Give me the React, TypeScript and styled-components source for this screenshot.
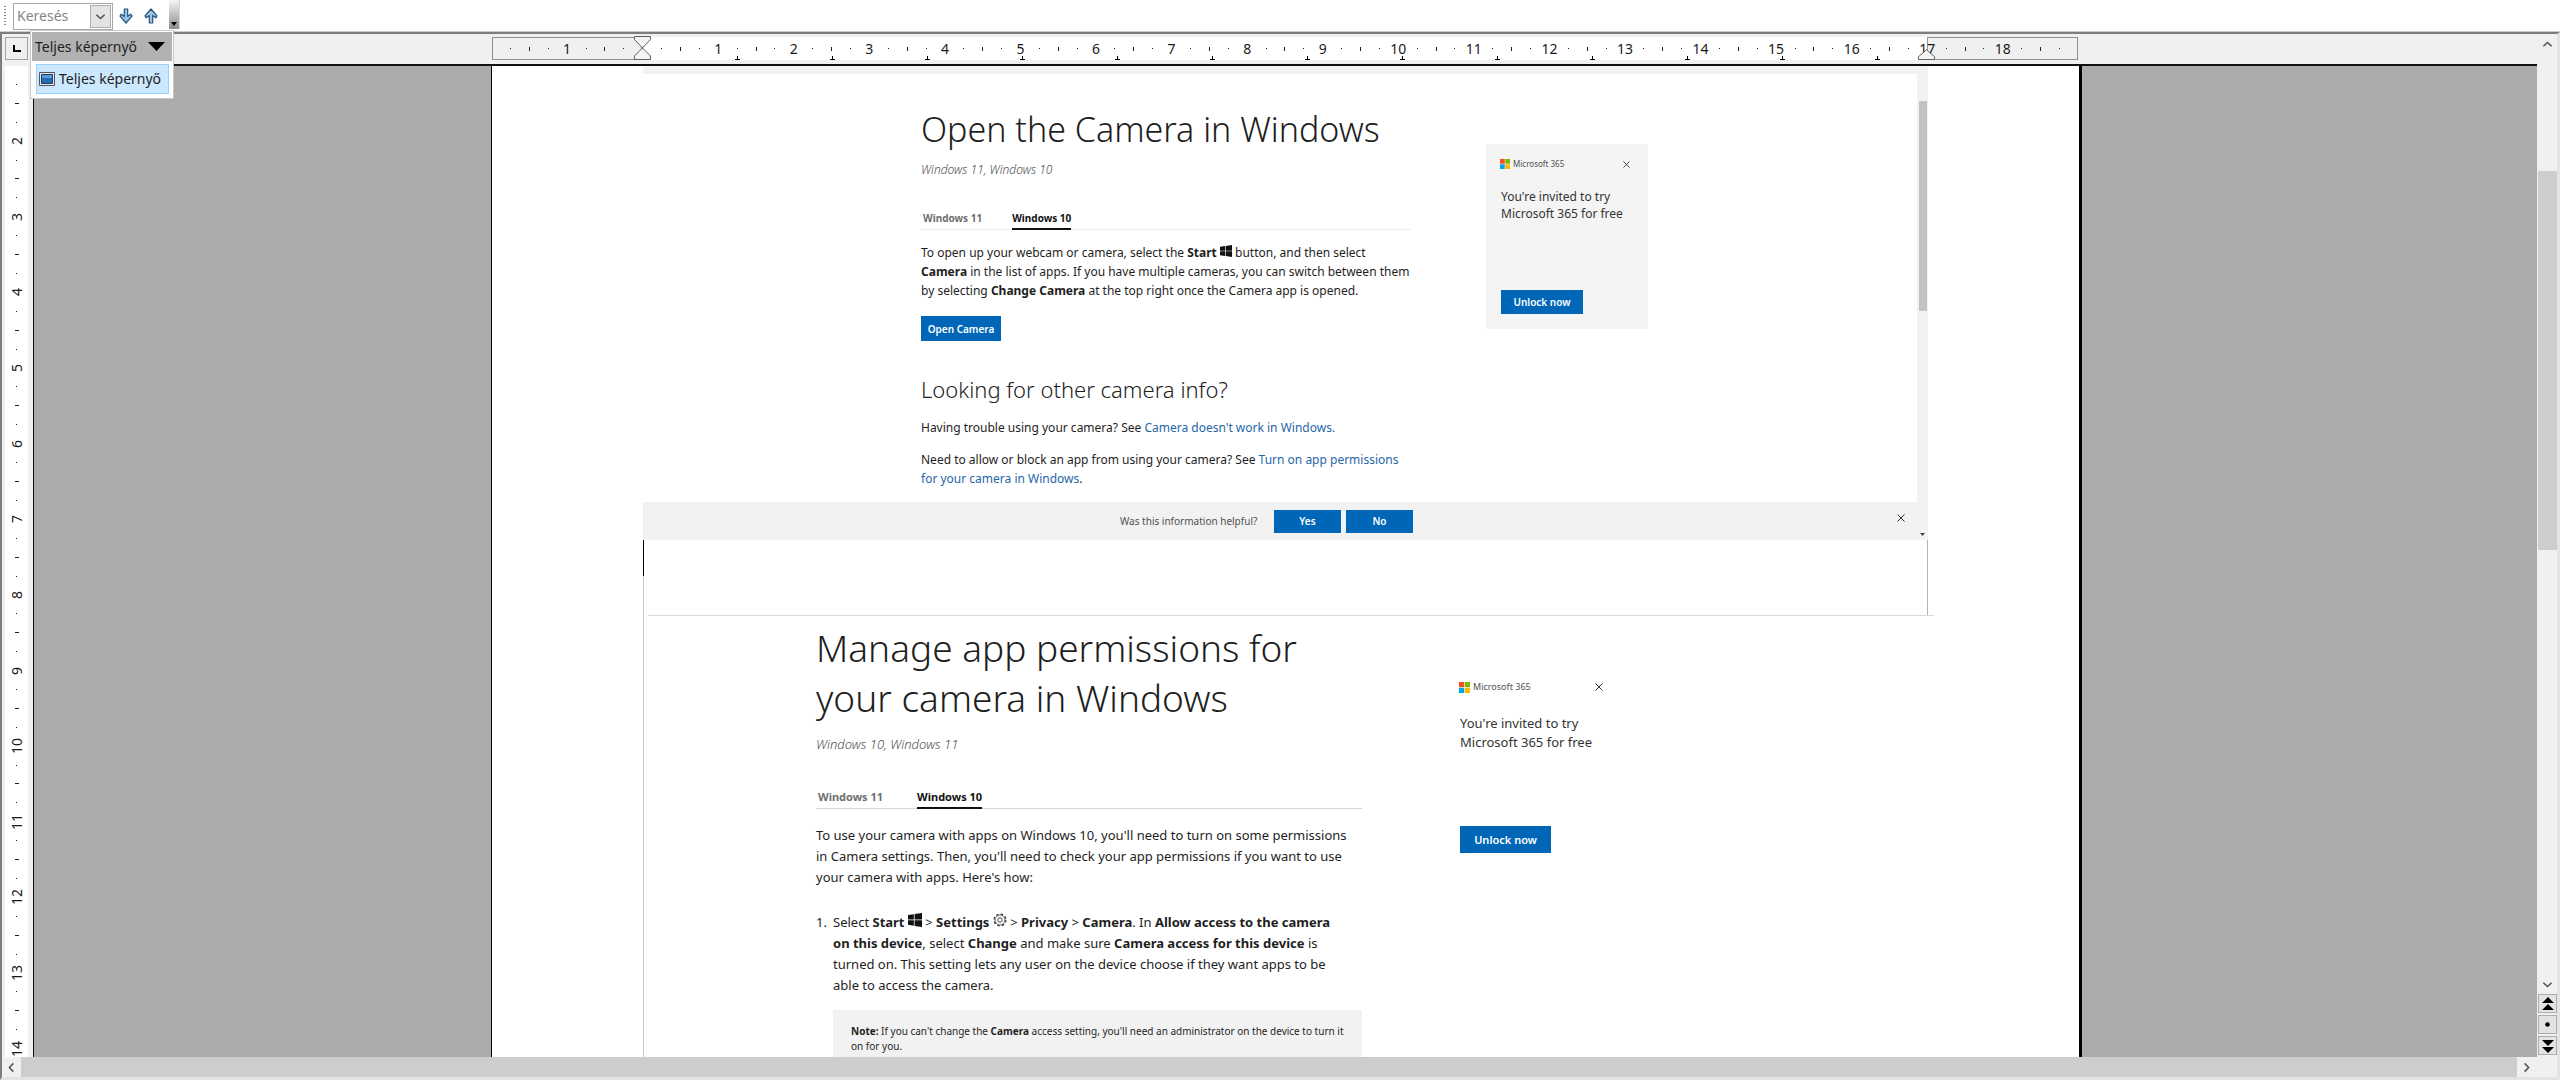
import React from "react";
import styled, { createGlobalStyle, css } from "styled-components";

const UI_FONT = '"Noto Sans", "Open Sans", sans-serif';

const GlobalStyle = createGlobalStyle`
  * { box-sizing: border-box; }
  html, body { margin: 0; background: #fff; overflow: hidden; }
  body { font-family: ${UI_FONT}; color: #1e1e1e; }
  button, input { font-family: inherit; margin: 0; padding: 0; border: 0; border-radius: 0; background: none; color: inherit; }
  h1, h2, p, ol { margin: 0; padding: 0; font-weight: 400; }
  b { font-weight: 700; }
  svg { display: block; flex: none; }
`;

/* ---------- window frame ---------- */

const Window = styled.div`
  display: flex;
  flex-direction: column;
  height: 100vh;
  min-height: 480px;
  position: relative;
`;

const Toolbar = styled.header`
  display: flex;
  align-items: center;
  height: 32px;
  flex: none;
  padding-left: 4px;
`;

const Grip = styled.div`
  width: 2px;
  height: 20px;
  margin-right: 7px;
  background: repeating-linear-gradient(#8c8c8c 0 1px, #fff 1px 3px);
`;

const SearchBox = styled.div`
  display: flex;
  align-items: center;
  width: 100px;
  height: 27px;
  padding-right: 1px;
  border: 1px solid #a8a8a8;
`;

const SearchInput = styled.input`
  flex: 1;
  min-width: 0;
  padding-left: 3px;
  font-size: 14px;
  line-height: 20px;
  outline: 0;
  &::placeholder { color: #868686; opacity: 1; }
`;

const DropButton = styled.button`
  display: grid;
  place-items: center;
  width: 21px;
  height: 23px;
  border: 1px solid #adadad;
  background: #e3e3e3;
`;

const ToolButton = styled.button`
  display: grid;
  place-items: center;
  width: 25px;
  height: 27px;
`;

const OverflowButton = styled.button`
  display: flex;
  align-items: flex-end;
  justify-content: center;
  align-self: flex-start;
  width: 11px;
  height: 29px;
  margin-left: 6px;
  padding-bottom: 3px;
  background: linear-gradient(#f4f4f4, #8e8e8e);
  border-right: 1px solid #d6d6d6;
`;

const Frame = styled.main`
  flex: 1;
  min-height: 0;
  display: grid;
  grid-template-columns: 32px minmax(0, 1fr) 20px;
  grid-template-rows: 32px minmax(0, 1fr) 20px;
  border-top: 2px solid #7d7d7d;
  border-left: 2px solid #7d7d7d;
  border-right: 3px solid #e3e3e3;
  border-bottom: 3px solid #e3e3e3;
  box-shadow: 0 -1px 0 #cdcdcd;
  background: #f0f0f0;
`;

/* ---------- rulers ---------- */

const Corner = styled.div`
  padding: 3px 0 0 3px;
  background: #f0f0f0;
`;

const TabTypeButton = styled.button`
  display: grid;
  place-items: center;
  width: 23px;
  height: 23px;
  border: 1px solid #a0a0a0;
`;

const RulerBand = styled.div`
  display: flex;
  justify-content: center;
  padding: 3px 1px 0 0;
  background: #f0f0f0;
  border-bottom: 2px solid #101010;
  overflow: hidden;
`;

const Ruler = styled.div`
  display: grid;
  grid-template-columns: 150px minmax(0, 1fr) 151px;
  grid-template-rows: 23px;
  width: 1586px;
  height: 23px;
  flex: none;
`;

const RulerZone = styled.div<{ $column: number; $text?: boolean }>`
  grid-row: 1;
  grid-column: ${(p) => p.$column};
  ${(p) =>
    p.$text
      ? css`background: #fff;`
      : css`border: 1px solid #8f8f8f;`}
`;

const Scale = styled.div`
  grid-row: 1;
  grid-column: 1 / -1;
  display: flex;
  align-items: center;
  padding: 0 9px;
`;

const Slot = styled.div`
  flex: 1 1 0;
  min-width: 0;
  min-height: 0;
  display: flex;
  align-items: center;
  justify-content: center;
  font-size: 14px;
  line-height: 20px;
  color: #1a1a1a;
`;

const Tick = styled.i<{ $w: number; $h: number }>`
  width: ${(p) => p.$w}px;
  height: ${(p) => p.$h}px;
  background: #222;
`;

const TabStops = styled.div`
  grid-row: 1;
  grid-column: 2;
  display: flex;
  align-items: flex-end;
  padding-left: 48px;
`;

const TabStop = styled.div`
  display: flex;
  justify-content: center;
  width: 95px;
  flex: none;
`;

const Marker = styled.div<{ $side: "left" | "right" }>`
  grid-row: 1;
  grid-column: 2;
  display: flex;
  align-items: flex-end;
  justify-self: ${(p) => (p.$side === "left" ? "start" : "end")};
  ${(p) => (p.$side === "left" ? "margin-left: -8px;" : "margin-right: -8px;")}
`;

const SideRuler = styled.div`
  padding: 0 4px 0 3px;
  border-right: 1px solid #101010;
  overflow: hidden;
`;

const SideScale = styled.div`
  display: flex;
  flex-direction: column;
  width: 23px;
  height: 1011px;
  padding-top: 9px;
  background: #fff;
`;

const SideNumber = styled.span`
  writing-mode: vertical-rl;
  transform: rotate(180deg);
`;

/* ---------- scroll bars ---------- */

const VScroll = styled.div`
  grid-column: 3;
  grid-row: 1 / 3;
  display: flex;
  flex-direction: column;
  align-items: stretch;
  padding-left: 1px;
  background: #f0f0f0;
`;

const ScrollButton = styled.button`
  display: grid;
  place-items: center;
  flex: none;
  height: 20px;
  min-width: 19px;
`;

const VTrack = styled.div`
  flex: 1;
  display: grid;
  grid-template-rows: 127fr 412fr 461fr;
`;

const Thumb = styled.div`
  grid-row: 2;
  background: #cdcdcd;
`;

const NavButton = styled.button`
  display: grid;
  place-items: center;
  flex: none;
  height: 19px;
  margin-bottom: 2px;
  border: 1px solid #adadad;
  background: #e3e3e3;
`;

const HScroll = styled.div`
  grid-column: 1 / -1;
  display: flex;
  padding-right: 21px;
`;

const HThumb = styled.div`
  flex: 1;
  background: #cdcdcd;
`;

/* ---------- document ---------- */

const Workspace = styled.div`
  display: flex;
  justify-content: center;
  padding-left: 2px;
  background: #ababab;
  overflow: hidden;
`;

const Sheet = styled.div`
  width: 1591px;
  flex: none;
  padding: 0 151px;
  background: #fff;
  border-left: 1px solid #000;
  border-right: 3px solid #000;
`;

const BrowserShot = styled.section`
  display: grid;
  grid-template-columns: minmax(0, 1fr) 11px;
  grid-template-rows: 8px 428px 38px;
`;

const ShotTop = styled.div`
  grid-column: 1 / -1;
  background: #f2f2f2;
`;

const ShotBody = styled.div`
  display: flex;
  align-items: flex-start;
  padding-left: 278px;
`;

const ShotTrack = styled.div`
  padding: 27px 1px 0 2px;
  background: #f2f2f2;
`;

const ShotThumb = styled.div`
  height: 210px;
  background: #c2c2c2;
`;

const Feedback = styled.footer`
  grid-column: 1 / -1;
  display: grid;
  grid-template-columns: minmax(0, 1fr) auto 11px;
  align-items: center;
  background: #f2f2f2;
`;

const FeedbackAsk = styled.div`
  display: flex;
  align-items: center;
  padding-left: 477px;
  font-size: 10px;
  line-height: 16px;
  color: #505050;
  white-space: nowrap;
`;

const FeedbackText = styled.span`
  width: 154px;
`;

const EmptyLine = styled.div`
  display: flex;
  justify-content: space-between;
  height: 75px;
  border-right: 1px solid #b4b4b4;
  border-left: 1px solid #c8c8c8;
`;

const Caret = styled.i`
  width: 1px;
  height: 36px;
  margin-left: -1px;
  background: #000;
`;

const SecondShot = styled.section`
  border-left: 1px solid #c8c8c8;
`;

const SecondRule = styled.div`
  height: 1px;
  margin: 0 -6px 0 4px;
  background: #d9d9d9;
`;

const SecondBody = styled.div`
  display: flex;
  align-items: flex-start;
  padding-left: 172px;
`;

const Article = styled.article<{ $w: number; $top: number }>`
  width: ${(p) => p.$w}px;
  flex: none;
  padding-top: ${(p) => p.$top}px;
  white-space: nowrap;
`;

const Title = styled.h1<{ $big?: boolean }>`
  font-weight: 300;
  font-size: ${(p) => (p.$big ? 37 : 34)}px;
  line-height: 50px;
`;

const Applies = styled.p<{ $big?: boolean }>`
  font-style: italic;
  font-weight: 300;
  color: #505050;
  font-size: ${(p) => (p.$big ? 13 : 12)}px;
  line-height: ${(p) => (p.$big ? 18 : 16)}px;
  margin-top: ${(p) => (p.$big ? 12 : 8)}px;
`;

const Tabs = styled.div<{ $big?: boolean }>`
  display: flex;
  gap: ${(p) => (p.$big ? 34 : 30)}px;
  padding-left: 2px;
  margin-top: ${(p) => (p.$big ? 36 : 32)}px;
  font-size: ${(p) => (p.$big ? 11 : 10)}px;
  box-shadow: inset 0 -1px 0 ${(p) => (p.$big ? "#d6d6d6" : "#ececec")};
`;

const Tab = styled.button<{ $active?: boolean }>`
  font-size: inherit;
  line-height: 16px;
  font-weight: 700;
  padding-bottom: 2px;
  color: ${(p) => (p.$active ? "#111" : "#6e6e6e")};
  border-bottom: 2px solid ${(p) => (p.$active ? "#111" : "transparent")};
`;

const Text = styled.p<{ $big?: boolean; $gap: number }>`
  font-size: ${(p) => (p.$big ? 13 : 12)}px;
  line-height: ${(p) => (p.$big ? 21 : 19)}px;
  margin-top: ${(p) => p.$gap}px;
`;

const Subtitle = styled.h2`
  font-weight: 300;
  font-size: 22px;
  line-height: 32px;
  margin-top: 32px;
`;

const Link = styled.a`
  color: #1f66a8;
  text-decoration: none;
`;

const BlueButton = styled.button<{ $w: number; $h: number; $size: number; $gap?: number }>`
  display: block;
  width: ${(p) => p.$w}px;
  height: ${(p) => p.$h}px;
  font-size: ${(p) => p.$size}px;
  line-height: 16px;
  margin-top: ${(p) => p.$gap || 0}px;
  background: #0067b8;
  color: #fff;
  font-weight: 600;
  white-space: nowrap;
`;

const AnswerButton = styled(BlueButton)`
  margin-right: 5px;
`;

const Steps = styled.ol`
  display: block;
  margin-top: 24px;
  list-style: none;
`;

const Step = styled.li`
  display: grid;
  grid-template-columns: 17px minmax(0, 1fr);
  font-size: 13px;
  line-height: 21px;
`;

const Note = styled.div`
  grid-column: 2;
  margin-top: 14px;
  padding: 14px 18px;
  height: 70px;
  background: #f2f2f2;
  font-size: 10px;
  line-height: 15px;
`;

const InlineIcon = styled.span`
  display: inline-block;
  vertical-align: 0;
  line-height: 0;
`;

const Promo = styled.aside<{ $big?: boolean }>`
  display: flex;
  flex-direction: column;
  align-items: flex-start;
  white-space: nowrap;
  color: #333;
  ${(p) =>
    p.$big
      ? css`
          width: 170px;
          margin: 63px 0 0 97px;
          padding-left: 1px;
        `
      : css`
          width: 162px;
          height: 185px;
          margin: 70px 0 0 75px;
          padding: 12px 15px 15px;
          background: #f4f4f4;
        `}
`;

const PromoHead = styled.div<{ $big?: boolean }>`
  display: flex;
  align-items: center;
  align-self: stretch;
  gap: 3px;
  margin-left: -1px;
  font-size: ${(p) => (p.$big ? 9 : 8)}px;
  line-height: 16px;
  color: #505050;
  margin-right: ${(p) => (p.$big ? 22 : -1)}px;
`;

const CloseButton = styled.button`
  display: grid;
  place-items: center;
  width: 16px;
  height: 16px;
  margin-left: auto;
`;

const PromoText = styled.p<{ $big?: boolean }>`
  font-size: ${(p) => (p.$big ? 13 : 12)}px;
  line-height: ${(p) => (p.$big ? 19 : 17)}px;
  margin-top: ${(p) => (p.$big ? 19 : 16)}px;
`;

const FeedbackClose = styled(CloseButton)`
  margin: 0 8px 6px 0;
`;

const FeedbackArrow = styled.div`
  align-self: end;
  padding: 0 0 4px 3px;
`;

/* ---------- floating full-screen toolbar ---------- */

const Floating = styled.div`
  position: absolute;
  left: 30px;
  top: 30px;
  width: 144px;
  border: 2px solid #fff;
  background: #fff;
  outline: 1px solid #c8c8c8;
  outline-offset: -1px;
  font-size: 14px;
  line-height: 20px;
  white-space: nowrap;
`;

const FloatingTitle = styled.div`
  display: flex;
  align-items: center;
  justify-content: space-between;
  height: 29px;
  padding: 0 7px 0 3px;
  background: #b2b2b2;
`;

const FloatingItem = styled.button`
  display: flex;
  align-items: center;
  gap: 4px;
  width: 133px;
  height: 30px;
  margin: 3px 4px 3px;
  padding-left: 2px;
  font-size: 14px;
  line-height: 20px;
  background: #cce8ff;
  border: 1px solid #99d1ff;
`;

/* ---------- drawings ---------- */

const Chevron = ({ turn = 0, w = 11 }: { turn?: number; w?: number }) => (
  <svg width={w} height={w} viewBox="0 0 12 12" fill="none" stroke="#505050" strokeWidth="1.6">
    <path d="M1.5 4 6 8.3 10.500 4" transform={`rotate(${turn} 6 6)`} />
  </svg>
);

const Arrow = ({ up }: { up?: boolean }) => (
  <svg width="14" height="16" viewBox="0 0 14 16">
    <path
      d="M5.300 1h3.400v7.500l3-2.300 1.300 2L7 15 1 8.200l1.300-2 3 2.300z"
      transform={up ? "rotate(180 7 8)" : undefined}
      fill="#9cc3e6"
      stroke="#24527f"
      strokeWidth="1.200"
      strokeLinejoin="round"
    />
  </svg>
);

const Cross = ({ size = 7 }: { size?: number }) => (
  <svg width={size} height={size} viewBox="0 0 8 8" stroke="#333" strokeWidth="1">
    <path d="M.5.5l7 7M7.500.5l-7 7" />
  </svg>
);

const WindowsFlag = ({ size = 13 }: { size?: number }) => (
  <svg width={size} height={size} viewBox="0 0 13 13" fill="#111">
    <path d="M0 1.900 5.400 1.100v5H0zM6.100 1 13 0v6.100H6.100zM0 6.800h5.400v5L0 11zM6.100 6.800H13V13l-6.900-1z" />
  </svg>
);

const Gear = () => (
  <svg width="14" height="14" viewBox="0 0 14 14" fill="none" stroke="#333">
    <circle cx="7" cy="7" r="5.900" strokeWidth="1.200" strokeDasharray="2.600 2.030" />
    <circle cx="7" cy="7" r="4.900" strokeWidth=".7" />
    <circle cx="7" cy="7" r="2.200" strokeWidth=".9" />
  </svg>
);

const MicrosoftLogo = ({ size }: { size: number }) => (
  <svg width={size} height={size} viewBox="0 0 11 11">
    <path fill="#f25022" d="M0 0h5.200v5.200H0z" />
    <path fill="#7fba00" d="M5.800 0H11v5.200H5.800z" />
    <path fill="#00a4ef" d="M0 5.800h5.200V11H0z" />
    <path fill="#ffb900" d="M5.800 5.800H11V11H5.800z" />
  </svg>
);

const DoubleTriangle = ({ down }: { down?: boolean }) => (
  <svg width="12" height="14" viewBox="0 0 12 14">
    <path d="M6 0l6 6H0zM6 7l6 6H0z" transform={down ? "rotate(180 6 7)" : undefined} />
  </svg>
);

/* ---------- parts ---------- */

const mark = (quarter: number) => Math.abs(quarter) % 4;

function HorizontalRuler() {
  const quarters = Array.from({ length: 83 }, (_, i) => i - 7);
  return (
    <RulerBand>
      <Ruler>
        <RulerZone $column={1} />
        <RulerZone $column={2} $text />
        <RulerZone $column={3} />
        <Scale>
          {quarters.map((q) => (
            <Slot key={q}>
              {mark(q) === 0 ? (q === 0 ? null : Math.abs(q / 4)) : <Tick $w={1} $h={mark(q) === 2 ? 4 : 1} />}
            </Slot>
          ))}
        </Scale>
        <TabStops>
          {Array.from({ length: 13 }, (_, i) => (
            <TabStop key={i}>
              <svg width="5" height="4" viewBox="0 0 5 4">
                <path d="M2 0h1v3h2v1H0V3h2z" />
              </svg>
            </TabStop>
          ))}
        </TabStops>
        <Marker $side="left">
          <svg width="17" height="24" viewBox="0 0 17 24" fill="#f4f4f4" stroke="#606060">
            <path d="M.5.5h16v3L8.500 12 .5 3.500zM8.500 12l8 8v3.500H.5V20z" />
          </svg>
        </Marker>
        <Marker $side="right">
          <svg width="17" height="11" viewBox="0 0 17 11" fill="#f4f4f4" stroke="#606060">
            <path d="M8.500.7l8 7v2.800H.5V7.700z" />
          </svg>
        </Marker>
      </Ruler>
    </RulerBand>
  );
}

function VerticalRuler() {
  const quarters = Array.from({ length: 53 }, (_, i) => i + 5);
  return (
    <SideRuler>
      <SideScale>
        {quarters.map((q) => (
          <Slot key={q}>
            {mark(q) === 0 ? <SideNumber>{q / 4}</SideNumber> : <Tick $w={mark(q) === 2 ? 4 : 1} $h={1} />}
          </Slot>
        ))}
      </SideScale>
    </SideRuler>
  );
}

function PromoCard({ big }: { big?: boolean }) {
  return (
    <Promo $big={big}>
      <PromoHead $big={big}>
        <MicrosoftLogo size={big ? 11 : 10} />
        <span>Microsoft 365</span>
        <CloseButton aria-label="Close">
          <Cross size={big ? 8 : 7} />
        </CloseButton>
      </PromoHead>
      <PromoText $big={big}>
        You're invited to try
        <br />
        Microsoft 365 for free
      </PromoText>
      {big ? (
        <BlueButton $w={91} $h={27} $size={11} $gap={74}>Unlock now</BlueButton>
      ) : (
        <BlueButton $w={82} $h={24} $size={10} $gap={68}>Unlock now</BlueButton>
      )}
    </Promo>
  );
}

function CameraPage() {
  return (
    <BrowserShot>
      <ShotTop />
      <ShotBody>
        <Article $w={490} $top={30}>
          <Title>Open the Camera in Windows</Title>
          <Applies>Windows 11, Windows 10</Applies>
          <Tabs>
            <Tab>Windows 11</Tab>
            <Tab $active>Windows 10</Tab>
          </Tabs>
          <Text $gap={13}>
            To open up your webcam or camera, select the <b>Start</b>{" "}
            <InlineIcon><WindowsFlag size={12} /></InlineIcon> button, and then select
            <br />
            <b>Camera</b> in the list of apps. If you have multiple cameras, you can switch between them
            <br />
            by selecting <b>Change Camera</b> at the top right once the Camera app is opened.
          </Text>
          <BlueButton $w={80} $h={25} $size={10} $gap={16}>Open Camera</BlueButton>
          <Subtitle>Looking for other camera info?</Subtitle>
          <Text $gap={13}>
            Having trouble using your camera? See <Link href="#doesnt-work">Camera doesn't work in Windows.</Link>
          </Text>
          <Text $gap={13}>
            Need to allow or block an app from using your camera? See{" "}
            <Link href="#permissions">
              Turn on app permissions
              <br />
              for your camera in Windows
            </Link>
            .
          </Text>
        </Article>
        <PromoCard />
      </ShotBody>
      <ShotTrack>
        <ShotThumb />
      </ShotTrack>
      <Feedback>
        <FeedbackAsk>
          <FeedbackText>Was this information helpful?</FeedbackText>
          <AnswerButton $w={67} $h={23} $size={10}>Yes</AnswerButton>
          <AnswerButton $w={67} $h={23} $size={10}>No</AnswerButton>
        </FeedbackAsk>
        <FeedbackClose aria-label="Close">
          <Cross size={8} />
        </FeedbackClose>
        <FeedbackArrow>
          <svg width="5" height="3" viewBox="0 0 5 3" fill="#444">
            <path d="M0 0h5L2.500 3z" />
          </svg>
        </FeedbackArrow>
      </Feedback>
    </BrowserShot>
  );
}

function PermissionsPage() {
  return (
    <SecondShot>
      <SecondRule />
      <SecondBody>
        <Article $w={546} $top={7}>
          <Title $big>
            Manage app permissions for
            <br />
            your camera in Windows
          </Title>
          <Applies $big>Windows 10, Windows 11</Applies>
          <Tabs $big>
            <Tab>Windows 11</Tab>
            <Tab $active>Windows 10</Tab>
          </Tabs>
          <Text $big $gap={16}>
            To use your camera with apps on Windows 10, you'll need to turn on some permissions
            <br />
            in Camera settings. Then, you'll need to check your app permissions if you want to use
            <br />
            your camera with apps. Here's how:
          </Text>
          <Steps>
            <Step>
              <span>1.</span>
              <div>
                Select <b>Start</b> <InlineIcon><WindowsFlag size={14} /></InlineIcon> &gt; <b>Settings</b>{" "}
                <InlineIcon><Gear /></InlineIcon> &gt; <b>Privacy</b> &gt; <b>Camera</b>. In{" "}
                <b>Allow access to the camera</b>
                <br />
                <b>on this device</b>, select <b>Change</b> and make sure <b>Camera access for this device</b> is
                <br />
                turned on. This setting lets any user on the device choose if they want apps to be
                <br />
                able to access the camera.
              </div>
              <Note>
                <b>Note:</b> If you can't change the <b>Camera</b> access setting, you'll need an administrator on the
                device to turn it
                <br />
                on for you.
              </Note>
            </Step>
          </Steps>
        </Article>
        <PromoCard big />
      </SecondBody>
    </SecondShot>
  );
}

export default function App() {
  return (
    <>
      <GlobalStyle />
      <Window>
        <Toolbar>
          <Grip />
          <SearchBox>
            <SearchInput type="text" placeholder="Keresés" aria-label="Keresés" />
            <DropButton aria-label="Keresési előzmények">
              <Chevron />
            </DropButton>
          </SearchBox>
          <ToolButton aria-label="Következő">
            <Arrow />
          </ToolButton>
          <ToolButton aria-label="Előző">
            <Arrow up />
          </ToolButton>
          <OverflowButton aria-label="További eszközök">
            <svg width="6" height="4" viewBox="0 0 6 4">
              <path d="M0 0h6L3 4z" />
            </svg>
          </OverflowButton>
        </Toolbar>
        <Frame>
          <Corner>
            <TabTypeButton aria-label="Tabulátor">
              <svg width="8" height="7" viewBox="0 0 8 7">
                <path d="M0 0h2v5h6v2H0z" />
              </svg>
            </TabTypeButton>
          </Corner>
          <HorizontalRuler />
          <VScroll>
            <ScrollButton aria-label="Fel"><Chevron turn={180} /></ScrollButton>
            <VTrack>
              <Thumb />
            </VTrack>
            <ScrollButton aria-label="Le"><Chevron /></ScrollButton>
            <NavButton aria-label="Előző oldal"><DoubleTriangle /></NavButton>
            <NavButton aria-label="Navigáció">
              <svg width="5" height="5" viewBox="0 0 5 5"><circle cx="2.500" cy="2.500" r="2.300" /></svg>
            </NavButton>
            <NavButton aria-label="Következő oldal"><DoubleTriangle down /></NavButton>
          </VScroll>
          <VerticalRuler />
          <Workspace>
            <Sheet>
              <CameraPage />
              <EmptyLine>
                <Caret />
              </EmptyLine>
              <PermissionsPage />
            </Sheet>
          </Workspace>
          <HScroll>
            <ScrollButton aria-label="Balra"><Chevron turn={90} /></ScrollButton>
            <HThumb />
            <ScrollButton aria-label="Jobbra"><Chevron turn={-90} /></ScrollButton>
          </HScroll>
        </Frame>
        <Floating>
          <FloatingTitle>
            Teljes képernyő
            <svg width="17" height="9" viewBox="0 0 17 9">
              <path d="M0 0h17L8.500 9z" />
            </svg>
          </FloatingTitle>
          <FloatingItem>
            <svg width="16" height="14" viewBox="0 0 16 14">
              <path fill="#e8e8e8" stroke="#555" d="M.5.5h15v13H.5z" />
              <path fill="#2a6cb0" stroke="#163f6e" d="M2.500 2.500h11v9h-11z" />
              <path fill="#5a9bd6" d="M3 3h10v3H3z" />
            </svg>
            Teljes képernyő
          </FloatingItem>
        </Floating>
      </Window>
    </>
  );
}
